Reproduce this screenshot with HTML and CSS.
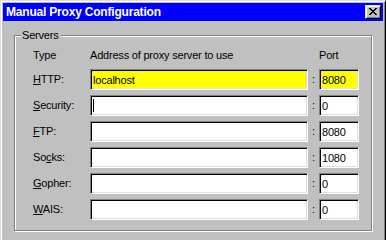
FILE: index.html
```html
<!DOCTYPE html>
<html>
<head>
<meta charset="utf-8">
<link rel="stylesheet" href="styles.css">
</head>
<body>
<div class="window">
  <div class="titlebar">
    <span class="title">Manual Proxy Configuration</span>
    <span class="close">
      <svg width="8" height="7" viewBox="0 0 8 7"><path d="M0 0h2v1h1v1h2v-1h1v-1h2v1h-1v1h-1v1h-1v1h1v1h1v1h1v1h-2v-1h-1v-1h-2v1h-1v1h-2v-1h1v-1h1v-1h1v-1h-1v-1h-1v-1h-1z" fill="#000"/></svg>
    </span>
  </div>
  <div class="content">
    <div class="group">
      <span class="legend">Servers</span>
      <div class="grid">
        <span class="hdr">Type</span>
        <span class="hdr">Address of proxy server to use</span>
        <span class="hdr"></span>
        <span class="hdr">Port</span>

        <span class="lbl"><u>H</u>TTP:</span>
        <span class="field hl">localhost</span>
        <span class="colon">:</span>
        <span class="field hl">8080</span>

        <span class="lbl"><u>S</u>ecurity:</span>
        <span class="field"><span class="caret"></span></span>
        <span class="colon">:</span>
        <span class="field">0</span>

        <span class="lbl"><u>F</u>TP:</span>
        <span class="field"></span>
        <span class="colon">:</span>
        <span class="field">8080</span>

        <span class="lbl">So<u>c</u>ks:</span>
        <span class="field"></span>
        <span class="colon">:</span>
        <span class="field">1080</span>

        <span class="lbl"><u>G</u>opher:</span>
        <span class="field"></span>
        <span class="colon">:</span>
        <span class="field">0</span>

        <span class="lbl"><u>W</u>AIS:</span>
        <span class="field"></span>
        <span class="colon">:</span>
        <span class="field">0</span>
      </div>
    </div>
  </div>
</div>
</body>
</html>
```
FILE: styles.css
```css
html, body {
  margin: 0;
  padding: 0;
  background: #c0c0c0;
  overflow: hidden;
}
body {
  width: 386px;
  height: 240px;
  font-family: "Liberation Sans", Arial, sans-serif;
  font-size: 11px;
  letter-spacing: -0.2px;
  color: #000;
}
.window {
  box-sizing: border-box;
  width: 386px;
  height: 240px;
  background: #c0c0c0;
  border-style: solid;
  border-width: 1px 1px 0 1px;
  border-color: #dfdfdf #000 #000 #dfdfdf;
  box-shadow: inset 1px 1px 0 #fff, inset -1px 0 0 #808080;
  padding: 2px 2px 0 2px;
}
.titlebar {
  height: 18px;
  background: #0000ff;
  display: flex;
  align-items: center;
  justify-content: space-between;
  padding: 0 2px 0 3px;
}
.title {
  color: #fff;
  font-weight: bold;
  font-size: 12px;
  letter-spacing: -0.2px;
  line-height: 14px;
}
.close {
  box-sizing: border-box;
  width: 16px;
  height: 14px;
  background: #c0c0c0;
  border-style: solid;
  border-width: 1px;
  border-color: #dfdfdf #000 #000 #dfdfdf;
  box-shadow: inset 1px 1px 0 #fff, inset -1px -1px 0 #808080;
  display: flex;
  align-items: center;
  justify-content: center;
  padding-bottom: 1px;
}
.close svg { display: block; }
.content {
  padding: 14px 0 0 11px;
}
.group {
  position: relative;
  box-sizing: border-box;
  width: 358px;
  height: 196px;
  border: 1px solid #808080;
  box-shadow: inset 1px 1px 0 #fff, 1px 1px 0 #fff;
  padding: 13px 0 0 18px;
}
.legend {
  position: absolute;
  top: -8px;
  left: 6px;
  padding: 0 2px 0 1px;
  background: #c0c0c0;
  line-height: 14px;
}
.grid {
  display: grid;
  grid-template-columns: 57px 218px 11px 40px;
  grid-template-rows: 15px repeat(6, 21px);
  row-gap: 5px;
  align-items: center;
}
.hdr {
  align-self: start;
  line-height: 13px;
}
.lbl {
  line-height: 13px;
}
.colon {
  text-align: center;
  line-height: 13px;
}
.field {
  box-sizing: border-box;
  height: 21px;
  background: #fff;
  border-style: solid;
  border-width: 1px;
  border-color: #808080 #fff #fff #808080;
  box-shadow: inset 1px 1px 0 #000, inset -1px -1px 0 #dfdfdf;
  padding: 3px 2px 0 2px;
  line-height: 14px;
  display: flex;
  align-items: flex-start;
}
.field.hl {
  background: #ffff00;
}
.caret {
  display: block;
  width: 1px;
  height: 13px;
  background: #000;
}
```
